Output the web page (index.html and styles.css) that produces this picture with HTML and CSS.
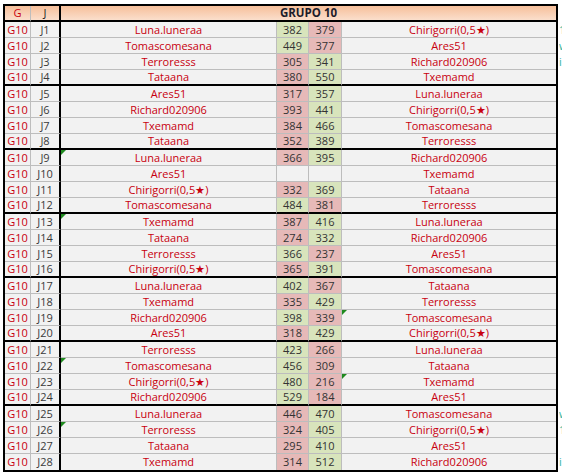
FILE: index.html
```html
<!DOCTYPE html>
<html>
<head>
<meta charset="utf-8">
<link rel="stylesheet" href="styles.css">
</head>
<body>
<div class="sheet">
  <div class="table">
    <div class="row head">
      <div class="c g">G</div>
      <div class="c j">J</div>
      <div class="c title">GRUPO 10</div>
    </div>
    <div class="row"><div class="c g">G10</div><div class="c j">J1</div><div class="c n">Luna.luneraa</div><div class="c s w">382</div><div class="c s l">379</div><div class="c n r">Chirigorri(0,5★)</div></div>
    <div class="row"><div class="c g">G10</div><div class="c j">J2</div><div class="c n">Tomascomesana</div><div class="c s w">449</div><div class="c s l">377</div><div class="c n r">Ares51</div></div>
    <div class="row"><div class="c g">G10</div><div class="c j">J3</div><div class="c n">Terroresss</div><div class="c s l">305</div><div class="c s w">341</div><div class="c n r">Richard020906</div></div>
    <div class="row grp"><div class="c g">G10</div><div class="c j">J4</div><div class="c n">Tataana</div><div class="c s l">380</div><div class="c s w">550</div><div class="c n r">Txemamd</div></div>
    <div class="row"><div class="c g">G10</div><div class="c j">J5</div><div class="c n">Ares51</div><div class="c s l">317</div><div class="c s w">357</div><div class="c n r">Luna.luneraa</div></div>
    <div class="row"><div class="c g">G10</div><div class="c j">J6</div><div class="c n">Richard020906</div><div class="c s l">393</div><div class="c s w">441</div><div class="c n r">Chirigorri(0,5★)</div></div>
    <div class="row"><div class="c g">G10</div><div class="c j">J7</div><div class="c n">Txemamd</div><div class="c s l">384</div><div class="c s w">466</div><div class="c n r">Tomascomesana</div></div>
    <div class="row grp"><div class="c g">G10</div><div class="c j">J8</div><div class="c n">Tataana</div><div class="c s l">352</div><div class="c s w">389</div><div class="c n r">Terroresss</div></div>
    <div class="row"><div class="c g">G10</div><div class="c j">J9</div><div class="c n mark">Luna.luneraa</div><div class="c s l">366</div><div class="c s w">395</div><div class="c n r">Richard020906</div></div>
    <div class="row"><div class="c g">G10</div><div class="c j">J10</div><div class="c n">Ares51</div><div class="c s"></div><div class="c s"></div><div class="c n r">Txemamd</div></div>
    <div class="row"><div class="c g">G10</div><div class="c j">J11</div><div class="c n">Chirigorri(0,5★)</div><div class="c s l">332</div><div class="c s w">369</div><div class="c n r">Tataana</div></div>
    <div class="row grp"><div class="c g">G10</div><div class="c j">J12</div><div class="c n">Tomascomesana</div><div class="c s w">484</div><div class="c s l">381</div><div class="c n r">Terroresss</div></div>
    <div class="row"><div class="c g">G10</div><div class="c j">J13</div><div class="c n mark">Txemamd</div><div class="c s l">387</div><div class="c s w">416</div><div class="c n r">Luna.luneraa</div></div>
    <div class="row"><div class="c g">G10</div><div class="c j">J14</div><div class="c n">Tataana</div><div class="c s l">274</div><div class="c s w">332</div><div class="c n r">Richard020906</div></div>
    <div class="row"><div class="c g">G10</div><div class="c j">J15</div><div class="c n">Terroresss</div><div class="c s w">366</div><div class="c s l">237</div><div class="c n r">Ares51</div></div>
    <div class="row grp"><div class="c g">G10</div><div class="c j">J16</div><div class="c n">Chirigorri(0,5★)</div><div class="c s l">365</div><div class="c s w">391</div><div class="c n r">Tomascomesana</div></div>
    <div class="row"><div class="c g">G10</div><div class="c j">J17</div><div class="c n">Luna.luneraa</div><div class="c s w">402</div><div class="c s l">367</div><div class="c n r">Tataana</div></div>
    <div class="row"><div class="c g">G10</div><div class="c j">J18</div><div class="c n">Txemamd</div><div class="c s l">335</div><div class="c s w">429</div><div class="c n r">Terroresss</div></div>
    <div class="row"><div class="c g">G10</div><div class="c j">J19</div><div class="c n">Richard020906</div><div class="c s w">398</div><div class="c s l">339</div><div class="c n r mark">Tomascomesana</div></div>
    <div class="row grp"><div class="c g">G10</div><div class="c j">J20</div><div class="c n">Ares51</div><div class="c s l">318</div><div class="c s w">429</div><div class="c n r">Chirigorri(0,5★)</div></div>
    <div class="row"><div class="c g">G10</div><div class="c j">J21</div><div class="c n">Terroresss</div><div class="c s w">423</div><div class="c s l">266</div><div class="c n r">Luna.luneraa</div></div>
    <div class="row"><div class="c g">G10</div><div class="c j">J22</div><div class="c n mark">Tomascomesana</div><div class="c s w">456</div><div class="c s l">309</div><div class="c n r">Tataana</div></div>
    <div class="row"><div class="c g">G10</div><div class="c j">J23</div><div class="c n">Chirigorri(0,5★)</div><div class="c s w">480</div><div class="c s l">216</div><div class="c n r mark">Txemamd</div></div>
    <div class="row grp"><div class="c g">G10</div><div class="c j">J24</div><div class="c n">Richard020906</div><div class="c s w">529</div><div class="c s l">184</div><div class="c n r">Ares51</div></div>
    <div class="row"><div class="c g">G10</div><div class="c j">J25</div><div class="c n">Luna.luneraa</div><div class="c s l">446</div><div class="c s w">470</div><div class="c n r">Tomascomesana</div></div>
    <div class="row"><div class="c g">G10</div><div class="c j">J26</div><div class="c n mark">Terroresss</div><div class="c s l">324</div><div class="c s w">405</div><div class="c n r">Chirigorri(0,5★)</div></div>
    <div class="row"><div class="c g">G10</div><div class="c j">J27</div><div class="c n">Tataana</div><div class="c s l">295</div><div class="c s w">410</div><div class="c n r">Ares51</div></div>
    <div class="row last"><div class="c g">G10</div><div class="c j">J28</div><div class="c n">Txemamd</div><div class="c s l">314</div><div class="c s w">512</div><div class="c n r">Richard020906</div></div>
  </div>
  <div class="spill">
    <div class="sp">1</div>
    <div class="sp">w</div>
    <div class="sp">i</div>
    <div class="sp"></div><div class="sp"></div><div class="sp"></div><div class="sp"></div>
    <div class="sp"></div><div class="sp"></div><div class="sp"></div><div class="sp"></div>
    <div class="sp"></div><div class="sp"></div><div class="sp"></div><div class="sp"></div>
    <div class="sp"></div><div class="sp"></div><div class="sp"></div><div class="sp"></div>
    <div class="sp"></div><div class="sp"></div><div class="sp"></div><div class="sp"></div>
    <div class="sp"></div>
    <div class="sp">w</div>
    <div class="sp">1</div>
    <div class="sp"></div>
    <div class="sp">i</div>
  </div>
</div>
</body>
</html>
```

FILE: styles.css
```css
html, body {
  margin: 0;
  padding: 0;
  background: #ffffff;
}

.sheet {
  display: flex;
  align-items: flex-start;
  padding: 4px 0 0 3px;
  font-family: "Open Sans", "Liberation Sans", sans-serif;
  font-size: 11px;
}

.table {
  border: 2px solid #000;
  background: #f2f2f2;
  width: 551px;
}

.row {
  display: grid;
  grid-template-columns: 26px 30px 216px 32px 33px 214px;
  height: 16px;
}

.row.head {
  grid-template-columns: 26px 30px 495px;
  background: linear-gradient(#f6bf9a, #fbe3d3);
}

.c {
  box-sizing: border-box;
  height: 16px;
  border-bottom: 1px solid #bdbdbd;
  border-right: 1px solid #bdbdbd;
  text-align: center;
  line-height: 15px;
  white-space: nowrap;
  overflow: hidden;
  position: relative;
}

.head .c {
  border-bottom: 2px solid #000;
  line-height: 14px;
}

.row.grp .c {
  border-bottom: 2px solid #000;
  line-height: 14px;
}

.row.last .c {
  border-bottom: none;
}

.c.j {
  border-right: 2px solid #000;
  color: #3a3a3a;
}

.c.g {
  color: #c8000f;
}

.head .c.g {
  color: #c8000f;
}

.head .c.j {
  color: #222;
}

.c.title {
  border-right: none;
  font-weight: bold;
  font-size: 11.5px;
  color: #1c1c2a;
}

.c.n {
  color: #c8000f;
}

.c.n.r {
  border-right: none;
}

.c.s {
  color: #333;
}

.c.s.w {
  background: #d8e4bc;
}

.c.s.l {
  background: #e6b9b8;
}

.c.mark::before {
  content: "";
  position: absolute;
  left: 0;
  top: 0;
  border-top: 5px solid #1f8a1f;
  border-right: 5px solid transparent;
}

.spill {
  width: 4px;
  overflow: hidden;
  padding-top: 18px;
  margin-left: 1px;
}

.sp {
  height: 16px;
  line-height: 15px;
  color: #2fb3a5;
  white-space: nowrap;
}
```
